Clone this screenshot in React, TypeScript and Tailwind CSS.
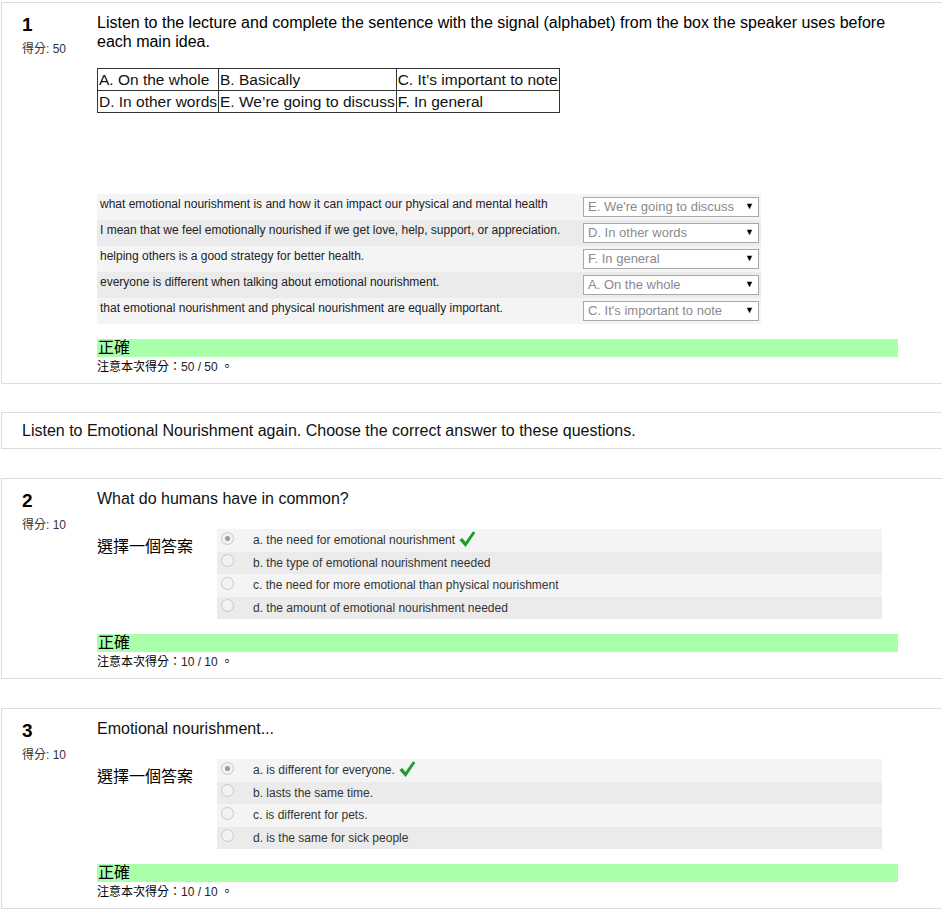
import React from 'react';

const FONT = { fontFamily: '"Liberation Sans", "Noto Sans CJK TC", sans-serif' };

const Check: React.FC = () => (
  <svg width="18" height="18" viewBox="0 0 16 16" className="inline-block ml-[3px] -mt-[5px] align-middle">
    <path d="M1.2 8.8 L3.8 7 L6.6 10.6 L13.4 1 L15.4 2.4 L6.8 15.2 Z" fill="#1e9d2c" />
  </svg>
);

const Radio: React.FC<{ on?: boolean }> = ({ on }) => (
  <span className="w-[13px] h-[13px] rounded-full border border-[#c8c8c8] bg-[#f2f2f2] flex items-center justify-center shrink-0">
    {on && <span className="w-[5px] h-[5px] rounded-full bg-[#9a9a9a]" />}
  </span>
);

const Card: React.FC<{ num: string; score: string; children: React.ReactNode; className?: string }> = ({ num, score, children, className }) => (
  <div className={`border border-r-0 border-[#dcdcdc] flex ${className ?? ''}`}>
    <div className="w-[95px] shrink-0 pl-[20px] pt-[11px]">
      <div className="text-[19px] font-bold text-black leading-[22px]">{num}</div>
      <div className="text-[12px] text-[#333] mt-[6px] leading-[14px]">得分: {score}</div>
    </div>
    <div className="flex-1 pt-[10px]">{children}</div>
  </div>
);

const Feedback: React.FC<{ score: string }> = ({ score }) => (
  <div className="w-[801px]">
    <div className="bg-[#aaffaa] h-[18px] text-[16px] leading-[18px] text-black px-[1px]">正確</div>
    <div className="text-[12px] leading-[16px] text-black mt-[2px]">注意本次得分：<span className="text-[#222]">{score}</span> 。</div>
  </div>
);

const matchRows = [
  ['what emotional nourishment is and how it can impact our physical and mental health', "E. We're going to discuss"],
  ['I mean that we feel emotionally nourished if we get love, help, support, or appreciation.', 'D. In other words'],
  ['helping others is a good strategy for better health.', 'F. In general'],
  ['everyone is different when talking about emotional nourishment.', 'A. On the whole'],
  ['that emotional nourishment and physical nourishment are equally important.', "C. It's important to note"],
];

const Options: React.FC<{ items: string[] }> = ({ items }) => (
  <div className="flex mt-[21px]">
    <div className="w-[120px] text-[16px] text-black pt-[8px] leading-[20px]">選擇一個答案</div>
    <div className="w-[665px]">
      {items.map((t, i) => (
        <div key={i} className={`flex items-center h-[22.5px] pl-[4px] ${i % 2 === 0 ? 'bg-[#f4f4f4]' : 'bg-[#ebebeb]'}`}>
          <div className="w-[32px] flex items-center -mt-[4px]"><Radio on={i === 0} /></div>
          <span className="text-[12px] text-[#333]">
            {t}
            {i === 0 && <Check />}
          </span>
        </div>
      ))}
    </div>
  </div>
);

const td = 'border border-[#333] px-[1px] whitespace-nowrap h-[22px]';

const App: React.FC = () => {
  return (
    <div className="w-[942px] h-[909px] bg-white overflow-hidden pt-[2px] pl-[1px]" style={FONT}>
      <Card num="1" score="50" className="h-[382px]">
        <p className="text-[16px] leading-[19px] text-black pr-[40px]">
          Listen to the lecture and complete the sentence with the signal (alphabet) from the box the speaker uses before each main idea.
        </p>
        <table className="mt-[17px] border-collapse text-[15.5px] text-[#111] leading-[20px]">
          <tbody>
            <tr>
              <td className={td}>A. On the whole</td>
              <td className={td}>B. Basically</td>
              <td className={td}>C. It’s important to note</td>
            </tr>
            <tr>
              <td className={td}>D. In other words</td>
              <td className={td}>E. We’re going to discuss</td>
              <td className={td}>F. In general</td>
            </tr>
          </tbody>
        </table>
        <div className="h-[81px]" />
        <div className="w-[664px]">
          {matchRows.map(([q, a], i) => (
            <div key={i} className={`flex items-center h-[26px] ${i % 2 === 0 ? 'bg-[#f4f4f4]' : 'bg-[#ebebeb]'}`}>
              <div className="w-[486px] pl-[3px] text-[12px] text-[#222] -mt-[6px] whitespace-nowrap">{q}</div>
              <div className="w-[176px] h-[20px] bg-white border border-[#a9a9a9] flex items-center justify-between pl-[4px] pr-[4px] text-[13px] text-[#8a8a8a]">
                <span>{a}</span>
                <span className="text-[9px] text-black">▼</span>
              </div>
            </div>
          ))}
        </div>
        <div className="mt-[15px]">
          <Feedback score="50 / 50" />
        </div>
      </Card>

      <div className="mt-[28px] h-[37px] border border-r-0 border-[#dcdcdc] flex items-center pl-[20px] text-[16px] text-[#111]">
        Listen to Emotional Nourishment again. Choose the correct answer to these questions.
      </div>

      <div className="mt-[29px]">
        <Card num="2" score="10" className="h-[201px]">
          <p className="text-[16px] leading-[19px] text-[#111]">What do humans have in common?</p>
          <Options
            items={[
              'a. the need for emotional nourishment',
              'b. the type of emotional nourishment needed',
              'c. the need for more emotional than physical nourishment',
              'd. the amount of emotional nourishment needed',
            ]}
          />
          <div className="mt-[15px]">
            <Feedback score="10 / 10" />
          </div>
        </Card>
      </div>

      <div className="mt-[29px]">
        <Card num="3" score="10" className="h-[201px]">
          <p className="text-[16px] leading-[19px] text-[#111]">Emotional nourishment...</p>
          <Options
            items={[
              'a. is different for everyone.',
              'b. lasts the same time.',
              'c. is different for pets.',
              'd. is the same for sick people',
            ]}
          />
          <div className="mt-[15px]">
            <Feedback score="10 / 10" />
          </div>
        </Card>
      </div>
    </div>
  );
};

export default App;
